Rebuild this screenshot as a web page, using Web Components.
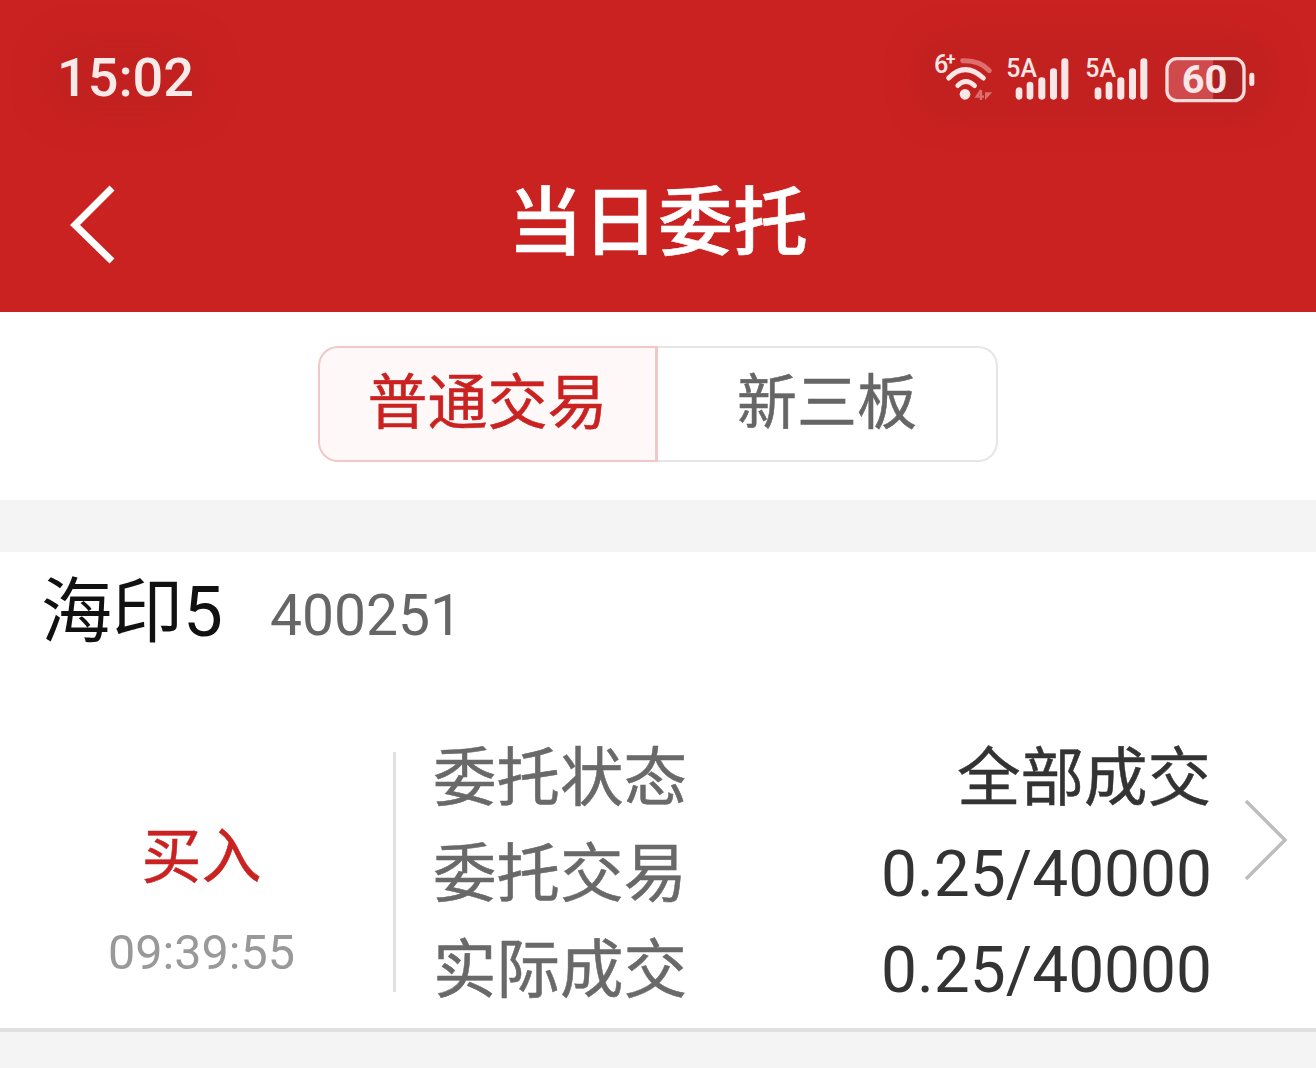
<!DOCTYPE html>
<html>
<head>
<meta charset="utf-8">
<title>当日委托</title>
<style>
    html, body { margin: 0; padding: 0; background: #f4f4f4; }
    body { font-family: Roboto, "Noto Sans CJK SC", sans-serif; width: 1316px; height: 1068px; overflow: hidden; }
</style>
</head>
<body>
<app-header heading="当日委托"></app-header>
<trade-tabs></trade-tabs>
<order-card name="海印5" code="400251" side="买入" time="09:39:55">
    <order-row label="委托状态" value="全部成交"></order-row>
    <order-row label="委托交易" value="0.25/40000"></order-row>
    <order-row label="实际成交" value="0.25/40000"></order-row>
</order-card>

<script>
const FONT = 'Roboto, "Noto Sans CJK SC", sans-serif';

class AppHeader extends HTMLElement {
    constructor() {
        super();
        this.attachShadow({ mode: 'open' });
        this.shadowRoot.innerHTML = `
            <style>
                :host { display: block; height: 312px; background: #c92221; color: #fff; font-family: ${FONT}; }
                .status { height: 130px; display: flex; justify-content: space-between; padding: 0 46px 0 57px; box-sizing: border-box; }
                .clock { font-size: 54px; font-weight: 500; line-height: 54px; margin-top: 51px; color: #f9eaea; height: 54px; border-radius: 24px; background: #c32120; box-shadow: 0 0 30px 12px #c32120; }
                .icons { display: block; margin-top: 40px; background: #c32120; border-radius: 30px; box-shadow: 0 0 26px 6px #c32120; }
                .nav { height: 182px; display: flex; align-items: center; justify-content: center; position: relative; }
                .back { position: absolute; left: 68px; top: 54px; }
                h1 { margin: 4px 0 0; font-size: 75px; font-weight: 500; line-height: 86px; -webkit-text-stroke: .6px #fff; }
            </style>
            <div class="status">
                <span class="clock">15:02</span>
                <svg class="icons" width="350" height="75" viewBox="0 0 1050 225" font-family="Roboto, sans-serif" fill="#f9e6e6">
                    <text x="42" y="100" font-size="76" font-weight="500">6</text>
                    <text x="78" y="74" font-size="52" font-weight="700">+</text>
                    <path d="M128 62Q180 60 208 92" fill="none" stroke="#dc6e6e" stroke-width="15" stroke-linecap="round"/>
                    <path d="M86 114Q135 64 190 114" fill="none" stroke="#f9e6e6" stroke-width="15" stroke-linecap="round"/>
                    <path d="M113 137Q137 112 164 137" fill="none" stroke="#f9e6e6" stroke-width="14" stroke-linecap="round"/>
                    <circle cx="135" cy="163" r="16"/>
                    <path d="M183 150L170 170H192M183 150V180" fill="none" stroke="#dc6e6e" stroke-width="7"/>
                    <path d="M195 150V180L217 157H195Z" fill="#dc6e6e"/>

                    <text x="259" y="110" font-size="76" font-weight="500" textLength="92" lengthAdjust="spacingAndGlyphs">5A</text>
                    <rect x="287" y="142" width="20" height="37" rx="10"/>
                    <rect x="320" y="125" width="20" height="54" rx="10"/>
                    <rect x="355" y="112" width="21" height="67" rx="10"/>
                    <rect x="390" y="85" width="21" height="94" rx="10"/>
                    <rect x="424" y="55" width="21" height="124" rx="10"/>

                    <text x="496" y="110" font-size="76" font-weight="500" textLength="92" lengthAdjust="spacingAndGlyphs">5A</text>
                    <rect x="524" y="142" width="20" height="37" rx="10"/>
                    <rect x="557" y="125" width="20" height="54" rx="10"/>
                    <rect x="592" y="112" width="21" height="67" rx="10"/>
                    <rect x="627" y="85" width="21" height="94" rx="10"/>
                    <rect x="661" y="55" width="21" height="124" rx="10"/>

                    <path d="M771 56H880V182H771A30 30 0 0 1 741 152V86A30 30 0 0 1 771 56Z" fill="#d0494b"/>
                    <path d="M880 56H942A30 30 0 0 1 972 86V152A30 30 0 0 1 942 182H880Z" fill="#ad2021"/>
                    <rect x="741" y="56" width="231" height="126" rx="30" fill="none" stroke="#f7dcdc" stroke-width="10"/>
                    <text x="785" y="160" font-size="116" font-weight="700" textLength="137" lengthAdjust="spacingAndGlyphs">60</text>
                    <rect x="988" y="98" width="15" height="40" rx="7"/>
                </svg>
            </div>
            <div class="nav">
                <svg class="back" width="50" height="80" viewBox="0 0 50 80">
                    <path d="M44 4L7 41L44 77" fill="none" stroke="#fff" stroke-width="7"/>
                </svg>
                <h1>${this.getAttribute('heading')}</h1>
            </div>
        `;
    }
}

class TradeTabs extends HTMLElement {
    constructor() {
        super();
        this.attachShadow({ mode: 'open' });
        this.shadowRoot.innerHTML = `
            <style>
                :host { display: flex; justify-content: center; align-items: flex-start; height: 188px; padding-top: 34px; box-sizing: border-box; background: #fff; font-family: ${FONT}; margin-bottom: 52px; }
                div { width: 340px; height: 116px; box-sizing: border-box; font-size: 60px; line-height: 112px; text-align: center; -webkit-text-stroke: .5px currentColor; }
                .on { color: #c92221; background: #fff8f8; border: 2px solid #f0c8c8; border-right-width: 3px; border-radius: 20px 0 0 20px; }
                .off { color: #666; border: 2px solid #e6e6e6; border-left: 0; border-radius: 0 20px 20px 0; }
            </style>
            <div class="on">普通交易</div>
            <div class="off">新三板</div>
        `;
    }
}

class OrderRow extends HTMLElement {
    constructor() {
        super();
        this.attachShadow({ mode: 'open' });
        const value = this.getAttribute('value');
        const numeric = /\d/.test(value);
        this.shadowRoot.innerHTML = `
            <style>
                :host { display: flex; justify-content: space-between; height: 96px; line-height: 98px; font-size: 63.5px; }
                .label { color: #696969; -webkit-text-stroke: .5px currentColor; }
                .value { color: #333; }
                .cjk { -webkit-text-stroke: .5px currentColor; }
                .num { font-size: 64px; line-height: 98px; margin-right: -1px; }
            </style>
            <span class="label">${this.getAttribute('label')}</span>
            <span class="value ${numeric ? 'num' : 'cjk'}">${value}</span>
        `;
    }
}

class OrderCard extends HTMLElement {
    constructor() {
        super();
        this.attachShadow({ mode: 'open' });
        this.shadowRoot.innerHTML = `
            <style>
                :host { display: block; height: 480px; box-sizing: border-box; background: #fff; border-bottom: 4px solid #e0e0e0; font-family: ${FONT}; }
                .title { height: 178px; padding: 10px 0 0 41px; box-sizing: border-box; display: flex; align-items: flex-start; }
                .name { font-size: 71px; line-height: 100px; color: #111; }
                .code { font-size: 57px; line-height: 108px; color: #666; margin-left: 47px; }
                .body { display: flex; height: 264px; align-items: stretch; margin-top: 22px; }
                .side { width: 393px; flex: none; box-sizing: border-box; display: flex; flex-direction: column; align-items: center; padding: 66px 0 0 10px; }
                .dir { font-size: 60px; line-height: 80px; color: #c92221; -webkit-text-stroke: .5px currentColor; }
                .time { font-size: 48.5px; line-height: 60px; color: #999; margin-top: 25px; }
                .rows { flex: none; width: 818px; height: 240px; border-left: 3px solid #e0e0e0; padding-left: 37px; box-sizing: border-box; }
                .rows-in { margin-top: -22px; }
                .arrow { display: block; margin: 46px 0 0 33px; }
            </style>
            <div class="title">
                <span class="name">${this.getAttribute('name')}</span>
                <span class="code">${this.getAttribute('code')}</span>
            </div>
            <div class="body">
                <div class="side">
                    <span class="dir">${this.getAttribute('side')}</span>
                    <span class="time">${this.getAttribute('time')}</span>
                </div>
                <div class="rows"><div class="rows-in"><slot></slot></div></div>
                <svg class="arrow" width="46" height="84" viewBox="0 0 46 84">
                    <path d="M2 3L41 42L2 81" fill="none" stroke="#bdbdbd" stroke-width="3.5"/>
                </svg>
            </div>
        `;
    }
}

customElements.define('app-header', AppHeader);
customElements.define('trade-tabs', TradeTabs);
customElements.define('order-row', OrderRow);
customElements.define('order-card', OrderCard);
</script>
</body>
</html>
